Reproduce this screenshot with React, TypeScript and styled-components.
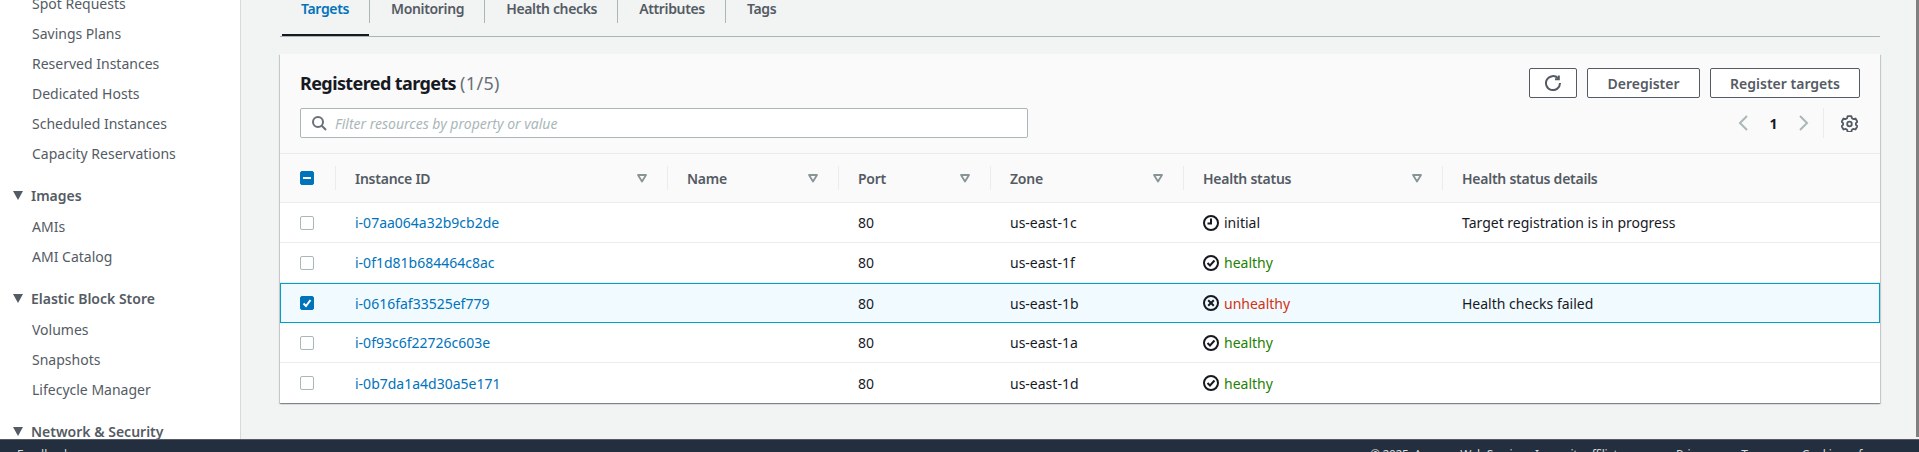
import React from 'react';
import styled, { createGlobalStyle } from 'styled-components';

const GlobalStyle = createGlobalStyle`
  html, body {
    margin: 0;
    padding: 0;
    height: 452px;
    overflow: hidden;
    background: #f2f3f3;
    font-family: 'Noto Sans', sans-serif;
    font-size: 14px;
    color: #16191f;
  }
`;

const Shell = styled.div`
  position: relative;
  width: 1919px;
  height: 452px;
  display: flex;
  flex-direction: column;
  overflow: hidden;
`;

const ScrollThumb = styled.div`
  position: absolute;
  top: 0;
  right: 0;
  width: 3px;
  height: 437px;
  background: #808080;
`;

const Body = styled.div`
  height: 439px;
  flex: none;
  display: flex;
  overflow: hidden;
`;

const Sidebar = styled.nav`
  width: 241px;
  flex: none;
  box-sizing: border-box;
  background: #fff;
  border-right: 1px solid #d5dbdb;
  padding-left: 13px;
  overflow: hidden;
`;

const SideList = styled.div`
  margin-top: -11px;
`;

const SideItem = styled.div`
  height: 30px;
  line-height: 30px;
  padding-left: 19px;
  color: #545b64;
  font-size: 14px;
`;

const SideSection = styled.div`
  height: 30px;
  box-sizing: border-box;
  margin-top: 13px;
  padding-bottom: 4px;
  display: flex;
  align-items: center;
  gap: 8px;
  color: #545b64;
  font-size: 14px;
  font-weight: 600;
`;

const Caret = styled.span`
  width: 0;
  height: 0;
  border-left: 5px solid transparent;
  border-right: 5px solid transparent;
  border-top: 9px solid #545b64;
`;

const Main = styled.main`
  flex: 1;
  padding: 0 39px;
`;

const Tabs = styled.div`
  display: flex;
  height: 36px;
  border-bottom: 1px solid #aab7b8;
  margin-bottom: 17px;
  padding-left: 2px;
`;

const Tab = styled.div<{ $active?: boolean }>`
  position: relative;
  height: 23px;
  line-height: 18px;
  padding: 0 20px 0 ${(p) => (p.$active ? '19px' : '21px')};
  font-weight: 600;
  letter-spacing: -0.35px;
  color: ${(p) => (p.$active ? '#0073bb' : '#545b64')};
  &:not(:last-child) {
    border-right: 1px solid #aab7b8;
  }
  ${(p) =>
    p.$active &&
    `
    &::after {
      content: '';
      position: absolute;
      left: 0;
      right: 0;
      top: 34px;
      height: 2px;
      background: #16191f;
    }
  `}
`;

const Card = styled.section`
  background: #fff;
  box-shadow: 0 1px 1px 0 rgba(0, 28, 36, 0.3), 1px 1px 1px 0 rgba(0, 28, 36, 0.15),
    -1px 1px 1px 0 rgba(0, 28, 36, 0.15);
`;

const CardHeader = styled.header`
  height: 100px;
  box-sizing: border-box;
  background: #fafafa;
  border-bottom: 1px solid #eaeded;
  padding: 14px 20px 0;
  display: grid;
  grid-template-columns: 728px 1fr;
  grid-template-rows: 30px 30px;
  row-gap: 10px;
`;

const Title = styled.h2`
  margin: 0;
  font-size: 18px;
  line-height: 30px;
  font-weight: 700;
  letter-spacing: -0.6px;
  color: #16191f;
  span {
    font-weight: 400;
    letter-spacing: 0.3px;
    color: #687078;
  }
`;

const Actions = styled.div`
  display: flex;
  justify-content: flex-end;
  gap: 10px;
`;

const Button = styled.button<{ $w: number }>`
  width: ${(p) => p.$w}px;
  height: 30px;
  display: flex;
  align-items: center;
  justify-content: center;
  padding: 0;
  background: #fff;
  border: 1px solid #545b64;
  border-radius: 2px;
  color: #545b64;
  font-family: inherit;
  font-size: 14px;
  font-weight: 600;
`;

const Search = styled.div`
  grid-row: 2;
  height: 30px;
  box-sizing: border-box;
  display: flex;
  align-items: center;
  gap: 8px;
  padding-left: 10px;
  background: #fff;
  border: 1px solid #aab7b8;
  border-radius: 2px;
  color: #aab7b8;
  font-style: italic;
`;

const Pager = styled.div`
  grid-row: 2;
  grid-column: 2;
  display: flex;
  align-items: center;
  justify-content: flex-end;
  padding-right: 2px;
`;

const PageNum = styled.span`
  width: 43px;
  text-align: center;
  font-weight: 700;
  color: #16191f;
`;

const PagerDivider = styled.span`
  width: 1px;
  height: 30px;
  background: #eaeded;
  margin: 0 17px 0 12px;
`;

const Row = styled.div<{ $selected?: boolean; $last?: boolean }>`
  display: grid;
  grid-template-columns: 55px 332px 171px 152px 193px 259px 1fr;
  height: 40px;
  box-sizing: border-box;
  align-items: center;
  background: ${(p) => (p.$selected ? '#f1faff' : '#fff')};
  border-bottom: ${(p) => (p.$last || p.$selected ? 'none' : '1px solid #eaeded')};
  ${(p) =>
    p.$selected &&
    `
    outline: 1px solid #00a1c9;
    outline-offset: -1px;
    position: relative;
  `}
`;

const HeadRow = styled(Row)`
  height: 49px;
  background: #fafafa;
`;

const HeadCell = styled.div`
  height: 24px;
  display: flex;
  align-items: center;
  justify-content: space-between;
  padding: 0 19px;
  border-left: 1px solid #eaeded;
  font-weight: 600;
  letter-spacing: -0.25px;
  color: #545b64;
`;

const SelectCell = styled.div`
  padding-left: 20px;
  display: flex;
  align-items: center;
`;

const Cell = styled.div`
  padding-left: 20px;
  display: flex;
  align-items: center;
  gap: 5px;
  color: #16191f;
`;

const InstanceLink = styled.a`
  color: #0073bb;
  text-decoration: none;
`;

const StatusText = styled.span<{ $color: string }>`
  color: ${(p) => p.$color};
`;

const Box = styled.span<{ $on?: boolean }>`
  width: 14px;
  height: 14px;
  box-sizing: border-box;
  display: flex;
  align-items: center;
  justify-content: center;
  border-radius: 2px;
  border: 1px solid ${(p) => (p.$on ? '#0073bb' : '#aab7b8')};
  background: ${(p) => (p.$on ? '#0073bb' : '#fff')};
`;

const Footer = styled.footer`
  height: 13px;
  box-sizing: border-box;
  flex: none;
  background: #232f3e;
  border-top: 1px solid #545b64;
  color: #d5dbdb;
  font-size: 12px;
  line-height: 16px;
  padding: 7px 16px 0 17px;
  display: flex;
  justify-content: space-between;
  overflow: hidden;
`;

const FooterLinks = styled.div`
  display: flex;
  gap: 28px;
  letter-spacing: -0.4px;
`;

const Copyright = styled.span`
  margin-right: 16px;
`;

const FilterIcon = () => (
  <svg width="12" height="12" viewBox="0 0 12 12" fill="none">
    <path d="M2 3h8L6 9.5z" stroke="#879596" strokeWidth="1.8" strokeLinejoin="round" />
  </svg>
);

const SearchIcon = () => (
  <svg width="16" height="16" viewBox="0 0 16 16" fill="none" stroke="#687078" strokeWidth="2">
    <circle cx="7" cy="7" r="5" />
    <path d="M10.8 10.8L15 15" />
  </svg>
);

const RefreshIcon = () => (
  <svg width="16" height="16" viewBox="0 0 16 16" fill="none" stroke="#545b64" strokeWidth="2">
    <path d="M13 3.2A7 7 0 1 0 15 8" />
    <path d="M13.8 0.5V4.2H10" />
  </svg>
);

const Chevron = ({ left }: { left?: boolean }) => (
  <svg width="16" height="16" viewBox="0 0 16 16" fill="none" stroke="#aab7b8" strokeWidth="2">
    <path d={left ? 'M11 1L4 8l7 7' : 'M5 1l7 7-7 7'} />
  </svg>
);

const GearIcon = () => (
  <svg width="17" height="17" viewBox="0 0 17 17" fill="none" stroke="#545b64" strokeWidth="1.8" strokeLinejoin="round">
    <path d="M6.600 1.200h3.800l.5 2 1.600.9 2-.6 1.900 3.300-1.500 1.400v1.600l1.500 1.400-1.900 3.300-2-.6-1.600.9-.5 2H6.600l-.5-2-1.600-.9-2 .6L.6 11.200l1.500-1.400V8.200L.6 6.800l1.900-3.300 2 .6 1.600-.9z" />
    <circle cx="8.500" cy="9" r="2.300" />
  </svg>
);

const StatusIcon = ({ kind }: { kind: string }) => (
  <svg width="16" height="16" viewBox="0 0 16 16" fill="none" stroke="#16191f" strokeWidth="2">
    <circle cx="8" cy="8" r="7" />
    {kind === 'initial' && <path d="M8 3.500V8.500H4.500" />}
    {kind === 'healthy' && <path d="M4.500 8l2.500 2.500L11.500 5.500" />}
    {kind === 'unhealthy' && <path d="M5.200 5.200l5.600 5.600M10.800 5.200l-5.600 5.600" />}
  </svg>
);

const statusColor: Record<string, string> = {
  initial: '#16191f',
  healthy: '#1d8102',
  unhealthy: '#d13212',
};

const sideTop = ['Spot Requests', 'Savings Plans', 'Reserved Instances', 'Dedicated Hosts', 'Scheduled Instances', 'Capacity Reservations'];

const targets = [
  { id: 'i-07aa064a32b9cb2de', zone: 'us-east-1c', status: 'initial', details: 'Target registration is in progress' },
  { id: 'i-0f1d81b684464c8ac', zone: 'us-east-1f', status: 'healthy', details: '' },
  { id: 'i-0616faf33525ef779', zone: 'us-east-1b', status: 'unhealthy', details: 'Health checks failed', selected: true },
  { id: 'i-0f93c6f22726c603e', zone: 'us-east-1a', status: 'healthy', details: '' },
  { id: 'i-0b7da1a4d30a5e171', zone: 'us-east-1d', status: 'healthy', details: '' },
];

export default function App() {
  return (
    <Shell>
      <GlobalStyle />
      <Body>
        <Sidebar>
          <SideList>
            {sideTop.map((s) => (
              <SideItem key={s}>{s}</SideItem>
            ))}
            <SideSection>
              <Caret />
              Images
            </SideSection>
            <SideItem>AMIs</SideItem>
            <SideItem>AMI Catalog</SideItem>
            <SideSection>
              <Caret />
              Elastic Block Store
            </SideSection>
            <SideItem>Volumes</SideItem>
            <SideItem>Snapshots</SideItem>
            <SideItem>Lifecycle Manager</SideItem>
            <SideSection>
              <Caret />
              Network &amp; Security
            </SideSection>
          </SideList>
        </Sidebar>
        <Main>
          <Tabs>
            <Tab $active>Targets</Tab>
            <Tab>Monitoring</Tab>
            <Tab>Health checks</Tab>
            <Tab>Attributes</Tab>
            <Tab>Tags</Tab>
          </Tabs>
          <Card>
            <CardHeader>
              <Title>
                Registered targets <span>(1/5)</span>
              </Title>
              <Actions>
                <Button $w={48}>
                  <RefreshIcon />
                </Button>
                <Button $w={113}>Deregister</Button>
                <Button $w={150}>Register targets</Button>
              </Actions>
              <Search>
                <SearchIcon />
                Filter resources by property or value
              </Search>
              <Pager>
                <Chevron left />
                <PageNum>1</PageNum>
                <Chevron />
                <PagerDivider />
                <GearIcon />
              </Pager>
            </CardHeader>
            <HeadRow>
              <SelectCell>
                <Box $on>
                  <svg width="10" height="10" viewBox="0 0 10 10">
                    <path d="M1 5h8" stroke="#fff" strokeWidth="2" />
                  </svg>
                </Box>
              </SelectCell>
              <HeadCell>
                Instance ID
                <FilterIcon />
              </HeadCell>
              <HeadCell>
                Name
                <FilterIcon />
              </HeadCell>
              <HeadCell>
                Port
                <FilterIcon />
              </HeadCell>
              <HeadCell>
                Zone
                <FilterIcon />
              </HeadCell>
              <HeadCell>
                Health status
                <FilterIcon />
              </HeadCell>
              <HeadCell>Health status details</HeadCell>
            </HeadRow>
            {targets.map((t, i) => (
              <Row key={t.id} $selected={t.selected} $last={i === targets.length - 1}>
                <SelectCell>
                  <Box $on={t.selected}>
                    {t.selected && (
                      <svg width="12" height="12" viewBox="0 0 12 12" fill="none">
                        <path d="M2.500 6.500l2.500 2.500 4.500-6" stroke="#fff" strokeWidth="2" />
                      </svg>
                    )}
                  </Box>
                </SelectCell>
                <Cell>
                  <InstanceLink href="#">{t.id}</InstanceLink>
                </Cell>
                <Cell />
                <Cell>80</Cell>
                <Cell>{t.zone}</Cell>
                <Cell>
                  <StatusIcon kind={t.status} />
                  <StatusText $color={statusColor[t.status]}>{t.status}</StatusText>
                </Cell>
                <Cell>{t.details}</Cell>
              </Row>
            ))}
          </Card>
        </Main>
      </Body>
      <Footer>
        <span>Feedback</span>
        <FooterLinks>
          <Copyright>© 2025, Amazon Web Services, Inc. or its affiliates.</Copyright>
          <span>Privacy</span>
          <span>Terms</span>
          <span>Cookie preferences</span>
        </FooterLinks>
      </Footer>
      <ScrollThumb />
    </Shell>
  );
}
